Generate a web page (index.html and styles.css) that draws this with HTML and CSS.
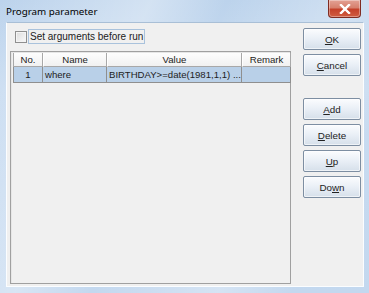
FILE: index.html
```html
<!DOCTYPE html>
<html>
<head>
<meta charset="utf-8">
<link rel="stylesheet" href="styles.css">
</head>
<body>
<div class="window">
  <div class="titlebar">
    <span class="title">Program parameter</span>
    <div class="close">
      <svg width="12" height="10" viewBox="0 0 12 10"><path d="M2 1 L10 9 M10 1 L2 9" stroke="#fff" stroke-width="2.4" stroke-linecap="square"/><path d="M2 1 L10 9 M10 1 L2 9" stroke="#fff" stroke-width="1.6"/></svg>
    </div>
  </div>
  <div class="client">
    <div class="left">
      <div class="opt">
        <span class="box"></span>
        <span class="focus">Set arguments before run</span>
      </div>
      <div class="pane">
        <div class="row head">
          <div class="c c1">No.</div>
          <div class="c c2">Name</div>
          <div class="c c3">Value</div>
          <div class="c c4">Remark</div>
        </div>
        <div class="row sel">
          <div class="c c1 num">1</div>
          <div class="c c2">where</div>
          <div class="c c3">BIRTHDAY&gt;=date(1981,1,1) ...</div>
          <div class="c c4"></div>
        </div>
      </div>
    </div>
    <div class="right">
      <button class="btn"><u>O</u>K</button>
      <button class="btn"><u>C</u>ancel</button>
      <div class="spacer"></div>
      <button class="btn"><u>A</u>dd</button>
      <button class="btn"><u>D</u>elete</button>
      <button class="btn"><u>U</u>p</button>
      <button class="btn">Do<u>w</u>n</button>
    </div>
  </div>
</div>
</body>
</html>
```
FILE: styles.css
```css
* { box-sizing: border-box; }
html, body { margin: 0; padding: 0; }
body { width: 369px; height: 293px; overflow: hidden; background: #c5daef; }
.window {
  width: 369px; height: 293px;
  display: flex; flex-direction: column;
  background:
    linear-gradient(115deg, rgba(255,255,255,0) 0%, rgba(255,255,255,0.35) 30%, rgba(255,255,255,0) 45%, rgba(255,255,255,0.3) 70%, rgba(255,255,255,0) 85%),
    linear-gradient(180deg, #bcd3ec 0%, #c9dcf1 30%, #c3d8ef 100%);
}
.titlebar {
  height: 22px; flex: none;
  display: flex; justify-content: space-between; align-items: flex-start;
  padding-left: 6px;
}
.title {
  font-family: "Noto Sans", "Open Sans", sans-serif;
  font-size: 9.8px; color: #000; line-height: 14px; margin-top: 5px;
}
.close {
  width: 33px; height: 18px; margin-right: 8px;
  border: 1px solid #7f2c22; border-top: none;
  border-radius: 0 0 4px 4px;
  background: linear-gradient(180deg, #e3a295 0%, #d7806d 45%, #c5412a 55%, #d05c40 100%);
  display: flex; align-items: center; justify-content: center;
  box-shadow: inset 0 0 0 1px rgba(255,255,255,0.35);
}
.client {
  flex: 1;
  margin: 0 5px 6px 6px;
  border: 1px solid #fbfdff;
  border-top-color: #a9bfd6;
  background: #f0f0f0;
  display: flex;
  padding: 0 2px 2px 3px;
  font-family: "Liberation Sans", Arial, sans-serif;
  font-size: 9.6px; color: #222;
}
.left { flex: 1; display: flex; flex-direction: column; min-width: 0; }
.opt { display: flex; align-items: center; height: 15px; margin-top: 6px; margin-left: 5px; }
.box {
  width: 12px; height: 12px; flex: none;
  border: 1px solid #8f8f8f;
  background: linear-gradient(135deg, #dcdcdc, #fafafa);
  box-shadow: inset 0 0 0 1px #f4f4f4;
}
.focus {
  margin-left: 1px; padding: 0 1px; height: 15px; line-height: 13px;
  border: 1px solid #a9c2dc; color: #222; font-size: 10px;
}
.pane {
  flex: 1; margin-top: 7px; margin-right: 1px;
  border: 1px solid #a0a0a0;
  box-shadow: inset 1px 1px 0 #e6e6e6;
  padding: 1px 0 0 2px;
}
.row { display: flex; }
.c { flex: none; white-space: nowrap; overflow: hidden; padding: 0 2px; }
.c1 { width: 30px; }
.c2 { width: 64px; }
.c3 { width: 135px; }
.c4 { width: 49px; }
.head { height: 14px; }
.head .c {
  text-align: center; line-height: 13px;
  background: linear-gradient(180deg, #fdfdfd, #f1f1f1);
  border-right: 1px solid #a8a8a8; border-bottom: 1px solid #a8a8a8;
  border-left: 1px solid #fff;
}
.head .c1 { border-left: 1px solid #a8a8a8; }
.sel { height: 16px; }
.sel .c {
  background: #b9d0e8; line-height: 15px;
  border-right: 1px solid #8f8f8f; border-bottom: 1px solid #8f8f8f;
}
.sel .c1 { border-left: 1px solid #8f8f8f; }
.num { text-align: center; }
.right {
  width: 58px; flex: none; margin-left: 11px;
  display: flex; flex-direction: column; padding-top: 5px;
}
.btn {
  height: 22px; width: 58px; margin: 0 0 4px 0; padding: 0;
  font-family: "Liberation Sans", Arial, sans-serif; font-size: 9.8px; color: #222;
  border: 1px solid #7d8ea2; border-radius: 2px;
  background: linear-gradient(180deg, #fbfcfe 0%, #e9eff6 50%, #d6e0ea 100%);
  box-shadow: inset 0 0 0 1px rgba(255,255,255,0.6);
}
.btn:nth-child(2) { margin-bottom: 0; }
.spacer { height: 22px; flex: none; }
.btn u { text-decoration-thickness: 1px; text-underline-offset: 1px; }
```
